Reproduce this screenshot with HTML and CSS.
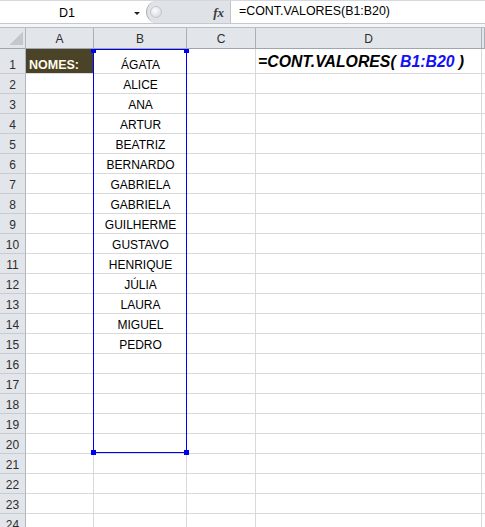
FILE: index.html
```html
<!DOCTYPE html>
<html lang="pt">
<head>
  <meta charset="UTF-8" />
  <title>CONT.VALORES</title>
  <link rel="stylesheet" href="styles.css">
</head>
<body>
  <div class="sheet">
    <div class="toolbar">
      <div class="fbar">
        <div class="namebox">
          <span class="name">D1</span>
          <span class="arrow"></span>
        </div>
        <div class="splitter">
          <span class="knob"></span>
          <span class="fx">fx</span>
        </div>
        <div class="formula">=CONT.VALORES(B1:B20)</div>
      </div>
      <div class="strip"></div>
    </div>

    <div class="grid">
      <div class="row head">
        <div class="corner"><span class="tri"></span></div>
        <div class="ch">A</div>
        <div class="ch">B</div>
        <div class="ch">C</div>
        <div class="ch">D</div>
        <div class="ch"></div>
      </div>
      <div class="row first">
        <div class="rh">1</div>
        <div class="c label">NOMES:</div>
        <div class="c mid">ÁGATA</div>
        <div class="c"></div>
        <div class="c big"><span class="expr">=CONT.VALORES( <span class="ref">B1:B20</span> )</span></div>
        <div class="c"></div>
      </div>
      <div class="row"><div class="rh">2</div><div class="c"></div><div class="c mid">ALICE</div><div class="c"></div><div class="c"></div><div class="c"></div></div>
      <div class="row"><div class="rh">3</div><div class="c"></div><div class="c mid">ANA</div><div class="c"></div><div class="c"></div><div class="c"></div></div>
      <div class="row"><div class="rh">4</div><div class="c"></div><div class="c mid">ARTUR</div><div class="c"></div><div class="c"></div><div class="c"></div></div>
      <div class="row"><div class="rh">5</div><div class="c"></div><div class="c mid">BEATRIZ</div><div class="c"></div><div class="c"></div><div class="c"></div></div>
      <div class="row"><div class="rh">6</div><div class="c"></div><div class="c mid">BERNARDO</div><div class="c"></div><div class="c"></div><div class="c"></div></div>
      <div class="row"><div class="rh">7</div><div class="c"></div><div class="c mid">GABRIELA</div><div class="c"></div><div class="c"></div><div class="c"></div></div>
      <div class="row"><div class="rh">8</div><div class="c"></div><div class="c mid">GABRIELA</div><div class="c"></div><div class="c"></div><div class="c"></div></div>
      <div class="row"><div class="rh">9</div><div class="c"></div><div class="c mid">GUILHERME</div><div class="c"></div><div class="c"></div><div class="c"></div></div>
      <div class="row"><div class="rh">10</div><div class="c"></div><div class="c mid">GUSTAVO</div><div class="c"></div><div class="c"></div><div class="c"></div></div>
      <div class="row"><div class="rh">11</div><div class="c"></div><div class="c mid">HENRIQUE</div><div class="c"></div><div class="c"></div><div class="c"></div></div>
      <div class="row"><div class="rh">12</div><div class="c"></div><div class="c mid">JÚLIA</div><div class="c"></div><div class="c"></div><div class="c"></div></div>
      <div class="row"><div class="rh">13</div><div class="c"></div><div class="c mid">LAURA</div><div class="c"></div><div class="c"></div><div class="c"></div></div>
      <div class="row"><div class="rh">14</div><div class="c"></div><div class="c mid">MIGUEL</div><div class="c"></div><div class="c"></div><div class="c"></div></div>
      <div class="row"><div class="rh">15</div><div class="c"></div><div class="c mid">PEDRO</div><div class="c"></div><div class="c"></div><div class="c"></div></div>
      <div class="row"><div class="rh">16</div><div class="c"></div><div class="c"></div><div class="c"></div><div class="c"></div><div class="c"></div></div>
      <div class="row"><div class="rh">17</div><div class="c"></div><div class="c"></div><div class="c"></div><div class="c"></div><div class="c"></div></div>
      <div class="row"><div class="rh">18</div><div class="c"></div><div class="c"></div><div class="c"></div><div class="c"></div><div class="c"></div></div>
      <div class="row"><div class="rh">19</div><div class="c"></div><div class="c"></div><div class="c"></div><div class="c"></div><div class="c"></div></div>
      <div class="row"><div class="rh">20</div><div class="c"></div><div class="c"></div><div class="c"></div><div class="c"></div><div class="c"></div></div>
      <div class="row"><div class="rh">21</div><div class="c"></div><div class="c"></div><div class="c"></div><div class="c"></div><div class="c"></div></div>
      <div class="row"><div class="rh">22</div><div class="c"></div><div class="c"></div><div class="c"></div><div class="c"></div><div class="c"></div></div>
      <div class="row"><div class="rh">23</div><div class="c"></div><div class="c"></div><div class="c"></div><div class="c"></div><div class="c"></div></div>
      <div class="row"><div class="rh">24</div><div class="c"></div><div class="c"></div><div class="c"></div><div class="c"></div><div class="c"></div></div>

      <!-- range highlight B1:B20 -->
      <div class="range">
        <span class="hd tl"></span>
        <span class="hd tr"></span>
        <span class="hd bl"></span>
        <span class="hd br"></span>
      </div>
    </div>
  </div>
</body>
</html>
```

FILE: styles.css
```css
* { box-sizing: border-box; margin: 0; padding: 0; }
html, body { height: 100%; }
body {
  font-family: 'Liberation Sans', Arial, sans-serif;
  font-size: 12px;
  color: #000;
  background: #fff;
  overflow: hidden;
}
.sheet { width: 485px; height: 527px; overflow: hidden; }

/* formula bar */
.toolbar { height: 28px; }
.fbar {
  height: 24px;
  display: flex;
  border-top: 1px solid #d3d8de;
  border-bottom: 1px solid #c4c9cf;
}
.namebox {
  flex: 0 0 146px;
  display: flex;
  align-items: center;
  background: #fff;
}
.namebox .name {
  flex: 1;
  text-align: center;
  padding-top: 2px;
  font-size: 12.5px;
}
.namebox .arrow {
  width: 0; height: 0;
  margin-right: 6px;
  margin-top: 2px;
  border-left: 3px solid transparent;
  border-right: 3px solid transparent;
  border-top: 3px solid #222;
}
.splitter {
  flex: 0 0 85px;
  display: flex;
  align-items: center;
  justify-content: space-between;
  padding: 0 6px 0 3px;
  background: #dfe3e8;
  border-left: 1px solid #aeb4bb;
  border-right: 1px solid #c0c5cb;
  border-radius: 11px 0 0 11px;
}
.knob {
  width: 12px; height: 12px;
  border-radius: 50%;
  background: radial-gradient(circle at 40% 35%, #fbfcfd, #cfd4da);
  border: 1px solid #c3c8ce;
}
.fx {
  font-family: 'Liberation Serif', serif;
  font-style: italic;
  font-weight: bold;
  font-size: 13px;
  color: #3c3c3c;
  padding-top: 1px;
}
.formula {
  flex: 1;
  background: #fff;
  padding: 3px 0 0 8px;
  font-size: 12.4px;
  white-space: nowrap;
}
.strip {
  height: 4px;
  background: #f3f5f7;
  border-bottom: 1px solid #b9bec4;
}

/* grid */
.grid { position: relative; }
.row {
  display: grid;
  grid-template-columns: 26px 68px 93px 69px 226px 1fr;
  height: 20px;
}
.row.first { height: 25px; }
.row.head { height: 21px; }

.corner, .ch, .rh {
  background: #e2e5e9;
  color: #2e2e2e;
}
.corner {
  display: flex;
  align-items: flex-end;
  justify-content: flex-end;
  padding: 0 2px 3px 0;
  border-right: 1px solid #b0b5bb;
  border-bottom: 1px solid #9fa5ac;
}
.tri {
  width: 14px; height: 13px;
  background: linear-gradient(to bottom right, transparent 50%, #c4c8cd 50%);
}
.ch {
  display: flex;
  align-items: center;
  justify-content: center;
  padding-top: 2px;
  border-right: 1px solid #aab0b6;
  border-bottom: 1px solid #9fa5ac;
}
.rh {
  display: flex;
  align-items: flex-end;
  justify-content: center;
  padding-bottom: 1px;
  line-height: 14px;
  border-right: 1px solid #b0b5bb;
  border-bottom: 1px solid #c8ccd1;
}
.c {
  display: flex;
  align-items: flex-end;
  padding: 0 2px 1px 3px;
  line-height: 14px;
  white-space: nowrap;
  border-right: 1px solid #d9d9d9;
  border-bottom: 1px solid #d9d9d9;
}
.c.mid { justify-content: center; }
.c.label {
  background: #4b4328;
  color: #fffbe8;
  font-weight: bold;
  font-size: 12.5px;
  border-right-color: #4b4328;
}
.c.big {
  font-weight: bold;
  font-style: italic;
  font-size: 15.8px;
  line-height: 18px;
  padding-left: 2px;
  padding-bottom: 2px;
}
.c.big .expr { white-space: pre; }
.c.big .ref { color: #1212f2; }

.range {
  position: absolute;
  left: 93px;
  top: 21px;
  width: 94px;
  height: 404px;
  border: 1px solid #0000f0;
}
.hd {
  position: absolute;
  width: 5px; height: 5px;
  background: #0000f0;
}
.hd.tl { left: -3px; top: -1px; height: 4px; }
.hd.tr { right: -3px; top: -1px; height: 4px; }
.hd.bl { left: -3px; bottom: -3px; }
.hd.br { right: -3px; bottom: -3px; }
```
